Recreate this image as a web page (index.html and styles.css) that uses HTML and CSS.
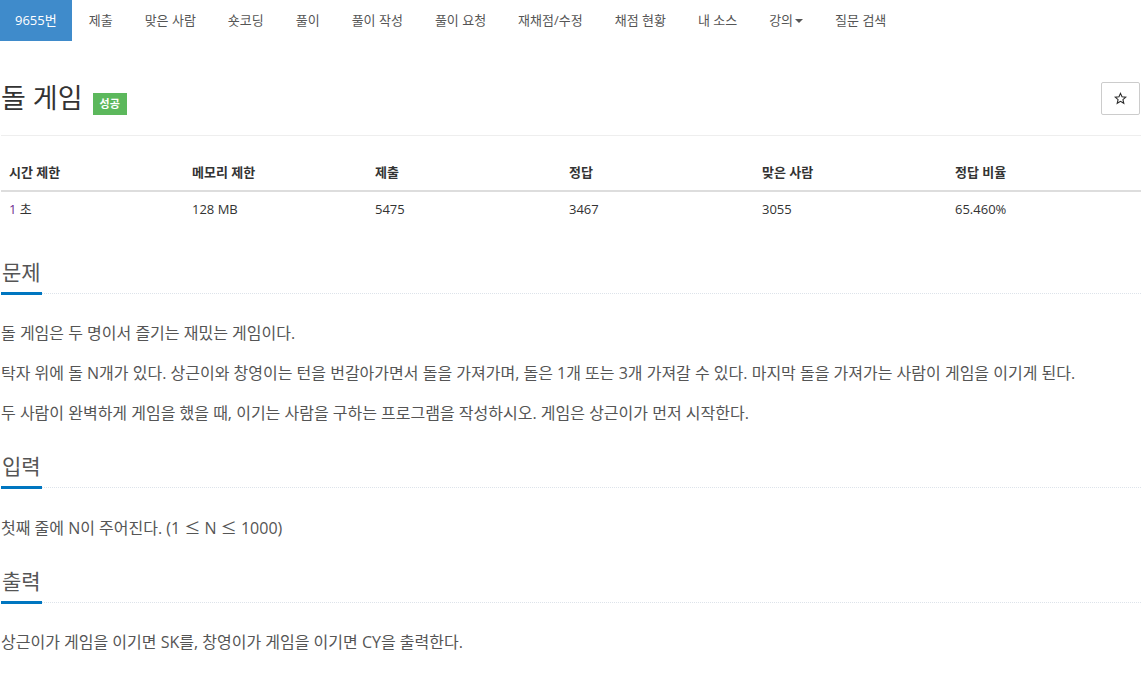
FILE: index.html
```html
<!DOCTYPE html>
<html lang="ko">
<head>
<meta charset="utf-8">
<title>돌 게임</title>
<link rel="stylesheet" href="styles.css">
</head>
<body>
<nav class="tabs">
  <ul class="tab-list">
    <li class="tab active">9655번</li>
    <li class="tab">제출</li>
    <li class="tab">맞은 사람</li>
    <li class="tab">숏코딩</li>
    <li class="tab">풀이</li>
    <li class="tab">풀이 작성</li>
    <li class="tab">풀이 요청</li>
    <li class="tab">재채점/수정</li>
    <li class="tab">채점 현황</li>
    <li class="tab">내 소스</li>
    <li class="tab">강의<span class="caret"></span></li>
    <li class="tab">질문 검색</li>
  </ul>
</nav>
<main class="container">
  <div class="page-header">
    <h1 class="title">돌 게임 <span class="label-success">성공</span></h1>
    <button class="star-btn" type="button" aria-label="즐겨찾기">
      <svg class="star-icon" viewBox="0 0 24 24" width="13" height="13"><path d="M12 2.5l2.8 6.3 6.9.6-5.2 4.6 1.6 6.8L12 17.2l-6.1 3.6 1.6-6.8-5.2-4.6 6.9-.6z" fill="none" stroke="#2b2b2b" stroke-width="2" stroke-linejoin="miter"/></svg>
    </button>
  </div>
  <table class="info-table">
    <thead>
      <tr>
        <th class="c1">시간 제한</th>
        <th class="c2">메모리 제한</th>
        <th class="c3">제출</th>
        <th class="c4">정답</th>
        <th class="c5">맞은 사람</th>
        <th class="c6">정답 비율</th>
      </tr>
    </thead>
    <tbody>
      <tr>
        <td><span class="time-num">1</span> 초</td>
        <td>128 MB</td>
        <td>5475</td>
        <td>3467</td>
        <td>3055</td>
        <td>65.460%</td>
      </tr>
    </tbody>
  </table>

  <section class="section">
    <div class="headline"><h2>문제</h2></div>
    <p>돌 게임은 두 명이서 즐기는 재밌는 게임이다.</p>
    <p>탁자 위에 돌 N개가 있다. 상근이와 창영이는 턴을 번갈아가면서 돌을 가져가며, 돌은 1개 또는 3개 가져갈 수 있다. 마지막 돌을 가져가는 사람이 게임을 이기게 된다.</p>
    <p>두 사람이 완벽하게 게임을 했을 때, 이기는 사람을 구하는 프로그램을 작성하시오. 게임은 상근이가 먼저 시작한다.</p>
  </section>
  <section class="section">
    <div class="headline"><h2>입력</h2></div>
    <p>첫째 줄에 N이 주어진다. (1 <span class="math">≤</span> N <span class="math">≤</span> 1000)</p>
  </section>
  <section class="section">
    <div class="headline"><h2>출력</h2></div>
    <p>상근이가 게임을 이기면 SK를, 창영이가 게임을 이기면 CY을 출력한다.</p>
  </section>
</main>
</body>
</html>
```

FILE: styles.css
```css
html, body {
  margin: 0;
  padding: 0;
  background: #fff;
}
body {
  font-family: "Open Sans", "Noto Sans CJK KR", sans-serif;
  color: #555;
  font-size: 14px;
}
.tabs {
  height: 41px;
}
.tab-list {
  list-style: none;
  margin: 0;
  padding: 0;
  display: flex;
  height: 41px;
}
.tab {
  padding: 0 15px;
  margin-right: 2px;
  height: 41px;
  line-height: 41px;
  font-size: 13px;
  color: #555;
  white-space: nowrap;
  display: flex;
  align-items: center;
}
.tab.active {
  background: #3f8bcb;
  color: #fff;
}
.caret {
  display: inline-block;
  width: 0;
  height: 0;
  margin-left: 2px;
  border-top: 4px solid #555;
  border-left: 4px solid transparent;
  border-right: 4px solid transparent;
}
.container {
  padding: 0 2px 0 1px;
}
.page-header {
  margin-top: 39px;
  display: flex;
  align-items: center;
  justify-content: space-between;
  padding-bottom: 19px;
  border-bottom: 1px solid #eee;
}
.title {
  margin: 0;
  font-size: 27px;
  line-height: 36px;
  font-weight: 400;
  color: #333;
  display: flex;
  align-items: center;
}
.label-success {
  display: inline-block;
  margin-left: 10px;
  margin-top: 12px;
  background: #5cb85c;
  color: #fff;
  font-size: 11px;
  font-weight: 700;
  height: 22px;
  line-height: 22px;
  padding: 0 7px;
}
.star-btn {
  width: 39px;
  height: 33px;
  margin-right: 1px;
  border: 1px solid #ccc;
  border-radius: 2px;
  background: #fff;
  padding: 0;
  display: flex;
  align-items: center;
  justify-content: center;
}
.star-icon {
  display: block;
}
.info-table {
  width: 100%;
  border-collapse: collapse;
  margin-top: 19px;
  margin-bottom: 30px;
  font-size: 13px;
  color: #333;
}
.info-table th,
.info-table td {
  text-align: left;
  padding: 8px;
  line-height: 19px;
}
.info-table th {
  font-weight: 700;
  border-bottom: 2px solid #ddd;
}
.c1, .c2 { width: 167px; }
.c3 { width: 178px; }
.c4, .c5 { width: 177px; }
.time-num {
  color: #6f2c91;
}
.section {
  margin-bottom: 23px;
}
.headline {
  display: flex;
  border-bottom: 1px dotted #dde3ea;
  margin-bottom: 24px;
}
.headline h2 {
  margin: 0 0 -2px 0;
  font-size: 21px;
  line-height: 30px;
  font-weight: 400;
  color: #555;
  padding: 0 1px 5px 1px;
  border-bottom: 3px solid #0076c0;
}
.section p {
  margin: 0 0 10px 0;
  font-size: 16px;
  line-height: 30px;
  color: #555;
}
.math {
  font-family: "Noto Sans CJK KR", sans-serif;
}
```
